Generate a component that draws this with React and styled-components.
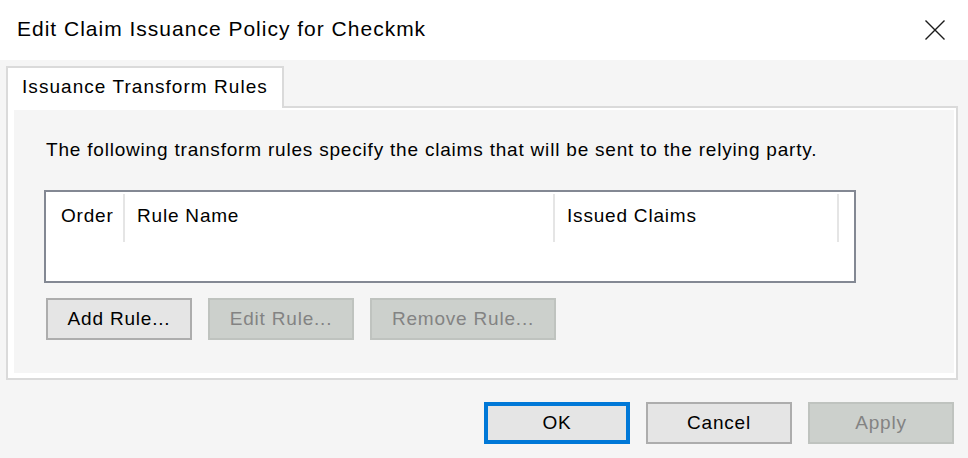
import React from "react";
import styled, { createGlobalStyle } from "styled-components";

const GlobalStyle = createGlobalStyle`
  html, body {
    margin: 0;
    padding: 0;
    background: #f5f5f5;
  }
  * {
    box-sizing: border-box;
  }
`;

const Window = styled.div`
  width: 968px;
  height: 458px;
  display: flex;
  flex-direction: column;
  background: #f5f5f5;
  font-family: "Liberation Sans", Arial, sans-serif;
  color: #000;
  overflow: hidden;
`;

const TitleBar = styled.div`
  height: 60px;
  flex-shrink: 0;
  display: flex;
  align-items: center;
  justify-content: space-between;
  padding: 0 23px 2px 17px;
  background: #fff;
`;

const Title = styled.div`
  font-size: 21px;
  letter-spacing: 1px;
`;

const CloseButton = styled.div`
  width: 20px;
  height: 20px;
  display: flex;
  margin-top: 2px;
`;

const Body = styled.div`
  flex: 1;
  display: flex;
  flex-direction: column;
  padding: 6px 10px 0 6px;
`;

const TabStrip = styled.div`
  display: flex;
`;

const Tab = styled.div`
  position: relative;
  z-index: 1;
  width: 278px;
  height: 42px;
  margin-bottom: -2px;
  padding: 0 0 2px 14px;
  display: flex;
  align-items: center;
  background: #fff;
  border: 2px solid #dadada;
  border-bottom: none;
  font-size: 19px;
  letter-spacing: 1.05px;
`;

const TabPanel = styled.div`
  height: 274px;
  padding: 2px 2px 5px 6px;
  background: #fff;
  border: 2px solid #dadada;
  display: flex;
`;

const Page = styled.div`
  flex: 1;
  background: #f5f5f5;
  padding: 29px 0 0 30px;
  display: flex;
  flex-direction: column;
`;

const Description = styled.div`
  margin-left: 2px;
  height: 22px;
  line-height: 22px;
  font-size: 19px;
  letter-spacing: 0.8px;
  white-space: nowrap;
`;

const ListView = styled.div`
  margin-top: 29px;
  width: 812px;
  height: 93px;
  border: 2px solid #838893;
  background: #fff;
`;

const HeaderRow = styled.div`
  display: flex;
  height: 50px;
  padding-top: 2px;
`;

const Column = styled.div`
  width: ${({ $w }) => $w}px;
  height: 48px;
  padding-left: ${({ $pad }) => $pad || 12}px;
  display: flex;
  align-items: center;
  padding-bottom: 4px;
  border-right: 2px solid #e5e5e5;
  font-size: 19px;
  letter-spacing: 0.8px;
`;

const ButtonRow = styled.div`
  display: flex;
  gap: 16px;
  margin: 15px 0 0 2px;
`;

const Button = styled.div`
  width: ${({ $w }) => $w || 146}px;
  height: 42px;
  display: flex;
  align-items: center;
  justify-content: center;
  font-size: 19px;
  letter-spacing: 0.8px;
  background: ${({ $disabled }) => ($disabled ? "#ccd0cc" : "#e5e5e5")};
  color: ${({ $disabled }) => ($disabled ? "#838383" : "#000")};
  border: ${({ $primary }) => ($primary ? "4px" : "2px")} solid
    ${({ $primary, $disabled }) =>
      $primary ? "#0078d7" : $disabled ? "#bfc3bf" : "#adadad"};
`;

const Footer = styled.div`
  display: flex;
  justify-content: flex-end;
  gap: 16px;
  margin: 22px 4px 0 0;
`;

function CloseIcon() {
  return (
    <svg width="20" height="20" viewBox="0 0 20 20">
      <path d="M0.5 0.5 L19.5 19.5 M19.5 0.5 L0.5 19.5" stroke="#1b1b1b" strokeWidth="1.4" />
    </svg>
  );
}

export default function App() {
  return (
    <Window>
      <GlobalStyle />
      <TitleBar>
        <Title>Edit Claim Issuance Policy for Checkmk</Title>
        <CloseButton>
          <CloseIcon />
        </CloseButton>
      </TitleBar>
      <Body>
        <TabStrip>
          <Tab>Issuance Transform Rules</Tab>
        </TabStrip>
        <TabPanel>
          <Page>
            <Description>
              The following transform rules specify the claims that will be sent to the relying party.
            </Description>
            <ListView>
              <HeaderRow>
                <Column $w={79} $pad={15}>Order</Column>
                <Column $w={430}>Rule Name</Column>
                <Column $w={284}>Issued Claims</Column>
              </HeaderRow>
            </ListView>
            <ButtonRow>
              <Button>Add Rule...</Button>
              <Button $disabled>Edit Rule...</Button>
              <Button $disabled $w={186}>Remove Rule...</Button>
            </ButtonRow>
          </Page>
        </TabPanel>
        <Footer>
          <Button $primary>OK</Button>
          <Button>Cancel</Button>
          <Button $disabled>Apply</Button>
        </Footer>
      </Body>
    </Window>
  );
}
